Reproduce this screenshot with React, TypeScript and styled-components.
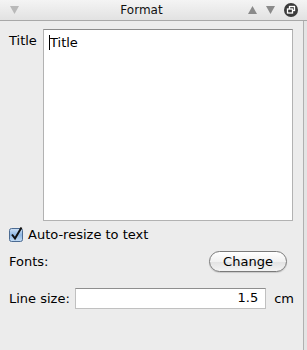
import React from "react";
import styled, { createGlobalStyle } from "styled-components";

const Global = createGlobalStyle`
  html, body { margin: 0; padding: 0; background: #e6e6e6; }
  body { font-family: "DejaVu Sans", "Liberation Sans", sans-serif; font-size: 13px; color: #000; }
`;

const Win = styled.div`
  width: 307px;
  height: 350px;
  display: flex;
  flex-direction: column;
  background: #e4e4e4;
  overflow: hidden;
`;

const TitleBar = styled.div`
  height: 20px;
  flex: none;
  display: flex;
  align-items: center;
  background: linear-gradient(#f4f4f4, #e2e2e2);
  border-bottom: 1px solid #a8a8a8;
  padding: 0 10px 0 10px;
`;

const TitleText = styled.div`
  flex: 1;
  text-align: center;
  font-size: 12px;
  color: #111;
  padding-left: 16px;
`;

const IconGroup = styled.div`
  display: flex;
  align-items: center;
  gap: 9px;
  margin-right: -1px;
`;

const Panel = styled.div`
  flex: none;
  height: 325px;
  margin-right: 3px;
  background: #ececec;
  border-right: 1px solid #b0b0b0;
  border-bottom: 1px solid #b0b0b0;
  display: flex;
  flex-direction: column;
  padding: 8px 9px 0 9px;
`;

const TitleRow = styled.div`
  display: flex;
  align-items: flex-start;
`;

const Label = styled.div<{ $w?: number; $top?: number }>`
  width: ${(p) => (p.$w ? `${p.$w}px` : "auto")};
  margin-top: ${(p) => (p.$top ? `${p.$top}px` : "0")};
  flex: none;
  white-space: nowrap;
`;

const TextArea = styled.div`
  width: 250px;
  height: 192px;
  background: #fff;
  border: 1px solid #b2b2b2;
  border-top-color: #8c8c8c;
  padding: 5px 5px;
  box-sizing: border-box;
`;

const Caret = styled.span`
  display: inline-block;
  width: 1px;
  height: 15px;
  background: #000;
  vertical-align: -3px;
`;

const CheckRow = styled.label`
  display: flex;
  align-items: center;
  gap: 5px;
  margin-top: 5px;
  height: 17px;
`;

const FontsRow = styled.div`
  display: flex;
  align-items: center;
  justify-content: space-between;
  margin-top: 7px;
  height: 22px;
  padding-right: 7px;
`;

const PillButton = styled.button`
  width: 78px;
  height: 21px;
  border-radius: 11px;
  border: 1px solid #7a7a7a;
  background: linear-gradient(#ffffff, #f1f1f1 50%, #e2e2e2 51%, #f4f4f4);
  font-family: inherit;
  font-size: 13px;
  color: #000;
  padding: 0;
  box-shadow: 0 1px 1px rgba(0,0,0,0.15);
`;

const LineRow = styled.div`
  display: flex;
  align-items: center;
  margin-top: 16px;
  height: 21px;
`;

const NumInput = styled.div`
  width: 194px;
  height: 21px;
  box-sizing: border-box;
  margin-left: 5px;
  background: #fff;
  border: 1px solid #c0c0c0;
  border-top-color: #8e8e8e;
  text-align: right;
  padding: 1px 7px 0 0;
`;

const Unit = styled.div`
  margin-left: 8px;
`;

const Disclosure = () => (
  <svg width="9" height="8" viewBox="0 0 9 8">
    <path d="M0 0 L9 0 L4.5 8 Z" fill="#b9b9b9" />
  </svg>
);

const Arrow = ({ up }: { up?: boolean }) => (
  <svg width="9" height="8" viewBox="0 0 9 8">
    <path d={up ? "M4.5 0 L9 8 L0 8 Z" : "M0 0 L9 0 L4.5 8 Z"} fill="#8a8a8a" />
  </svg>
);

const CircleIcon = () => (
  <svg width="14" height="14" viewBox="0 0 14 14">
    <circle cx="7" cy="7" r="7" fill="#3a3a3a" />
    <rect x="5.5" y="3.5" width="5" height="4" fill="none" stroke="#fff" strokeWidth="1.3" />
    <rect x="3.5" y="6" width="5" height="4" fill="#3a3a3a" stroke="#fff" strokeWidth="1.3" />
  </svg>
);

const CheckBox = () => (
  <svg width="14" height="15" viewBox="0 0 14 15">
    <defs>
      <linearGradient id="cb" x1="0" y1="0" x2="0" y2="1">
        <stop offset="0" stopColor="#cfe2f6" />
        <stop offset="0.5" stopColor="#8fb7e3" />
        <stop offset="1" stopColor="#c6def5" />
      </linearGradient>
    </defs>
    <rect x="0.5" y="1.5" width="13" height="13" rx="2" fill="url(#cb)" stroke="#4c6b92" />
    <path d="M3 7.5 L6 11.5 L12.5 0.5" fill="none" stroke="#111" strokeWidth="2" />
  </svg>
);

export default function App() {
  return (
    <>
      <Global />
      <Win>
        <TitleBar>
          <Disclosure />
          <TitleText>Format</TitleText>
          <IconGroup>
            <Arrow up />
            <Arrow />
            <CircleIcon />
          </IconGroup>
        </TitleBar>
        <Panel>
          <TitleRow>
            <Label $w={34} $top={4}>Title</Label>
            <TextArea>
              <Caret />Title
            </TextArea>
          </TitleRow>
          <CheckRow>
            <CheckBox />
            <span>Auto-resize to text</span>
          </CheckRow>
          <FontsRow>
            <Label>Fonts:</Label>
            <PillButton>Change</PillButton>
          </FontsRow>
          <LineRow>
            <Label>Line size:</Label>
            <NumInput>1.5</NumInput>
            <Unit>cm</Unit>
          </LineRow>
        </Panel>
      </Win>
    </>
  );
}
